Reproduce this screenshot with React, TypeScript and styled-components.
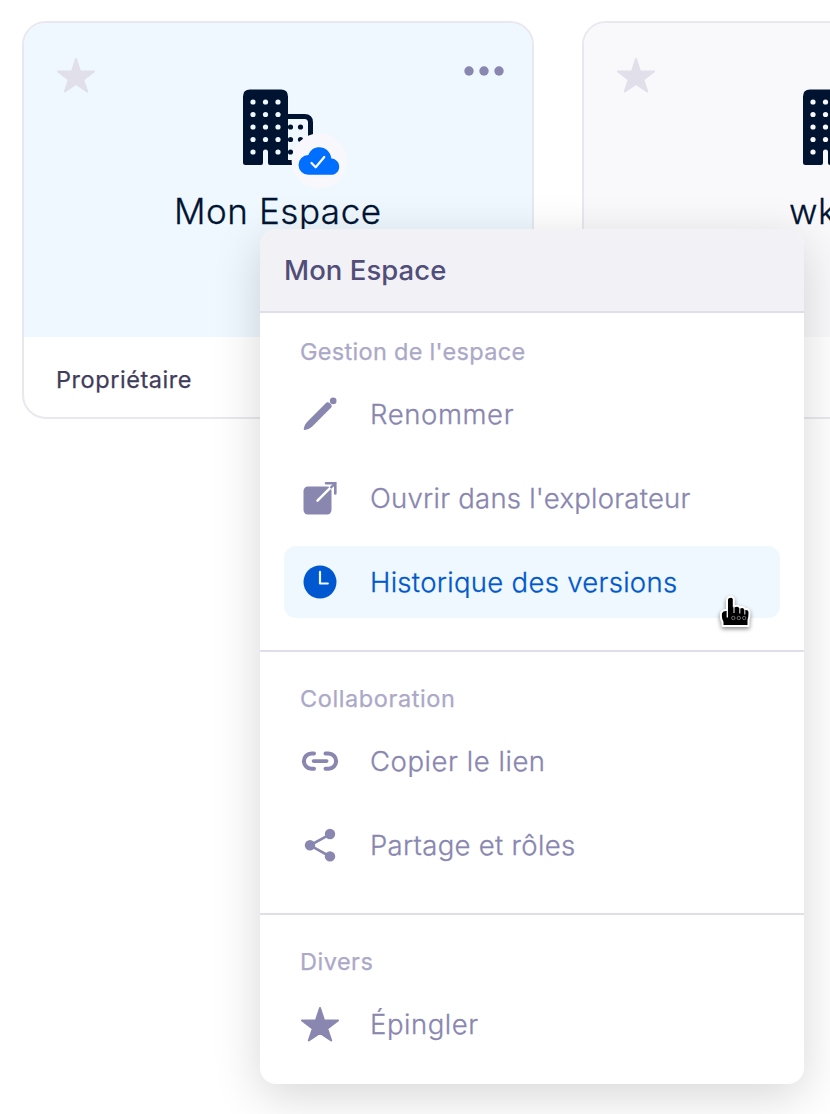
import React from "react";
import styled, { createGlobalStyle } from "styled-components";

const GlobalStyle = createGlobalStyle`
  * { box-sizing: border-box; }
  body {
    margin: 0;
    background: #fff;
    font-family: Inter, "Liberation Sans", sans-serif;
    overflow: hidden;
  }
  svg { display: block; flex: none; overflow: visible; }
`;

const Page = styled.main`
  position: relative;
  width: 830px;
  height: 1114px;
  overflow: hidden;
  padding: 21px 0 0 22px;
`;

const CardRow = styled.div`
  display: flex;
  gap: 48px;
`;

const Card = styled.article`
  flex: none;
  width: 512px;
  height: 398px;
  border: 2px solid #e9e8ef;
  border-radius: 24px;
  overflow: hidden;
  background: #fff;
`;

const CardBody = styled.div<{ $active?: boolean }>`
  height: 314px;
  padding: 33px 28px 0 32px;
  background: ${(p) => (p.$active ? "#eff7ff" : "#f9f9fc")};
`;

const CardTop = styled.div`
  display: flex;
  align-items: flex-start;
  height: 132px;
`;

const BuildingSlot = styled.div`
  margin: 33px auto 0 113px;
`;

const MoreButton = styled.button`
  border: 0;
  padding: 0;
  background: none;
`;

const CardTitle = styled.h2<{ $indent: number }>`
  margin: 0;
  padding-left: ${(p) => p.$indent}px;
  font-size: 35px;
  font-weight: 300;
  line-height: 46px;
  letter-spacing: 0.55px;
  -webkit-text-stroke: 0.3px;
  color: #001432;
  white-space: nowrap;
`;

const CardFooter = styled.footer`
  display: flex;
  align-items: center;
  height: 80px;
  padding: 4px 32px 0;
  font-size: 23.5px;
  font-weight: 400;
  letter-spacing: 0.55px;
  -webkit-text-stroke: 0.25px;
  color: #3f3c5c;
`;

const Menu = styled.div`
  position: absolute;
  left: 260px;
  top: 229px;
  width: 544px;
  height: 855px;
  border-radius: 16px;
  background: #fff;
  box-shadow: 0 12px 48px rgba(0, 0, 0, 0.16);
`;

const MenuHeader = styled.header`
  height: 84px;
  padding: 0 24px;
  border-bottom: 2px solid #dfdeea;
  border-radius: 16px 16px 0 0;
  background: #f2f1f6;
  font-size: 27.5px;
  font-weight: 500;
  line-height: 83px;
  letter-spacing: 0.05px;
  color: #514e7a;
`;

const Section = styled.section<{ $top: number; $bottom: number }>`
  padding: ${(p) => p.$top}px 24px ${(p) => p.$bottom}px;
  & + & { border-top: 2px solid #dfdeea; }
`;

const SectionLabel = styled.h3<{ $gap?: number; $spacing?: number }>`
  margin: 0 0 ${(p) => p.$gap ?? 12}px;
  padding-left: 16px;
  font-size: 23.5px;
  font-weight: 400;
  line-height: 30px;
  letter-spacing: ${(p) => p.$spacing ?? 0.5}px;
  -webkit-text-stroke: 0.25px;
  color: #aba8c8;
`;

const Items = styled.div`
  display: flex;
  flex-direction: column;
  gap: 12px;
`;

const Item = styled.div<{ $active?: boolean; $spacing: number }>`
  display: flex;
  align-items: center;
  gap: 30px;
  height: 72px;
  padding: 0 16px;
  border-radius: 12px;
  font-size: 27.5px;
  font-weight: 300;
  letter-spacing: ${(p) => p.$spacing}px;
  -webkit-text-stroke: 0.3px;
  white-space: nowrap;
  color: ${(p) => (p.$active ? "#0058cc" : "#8986b0")};
  background: ${(p) => (p.$active ? "#eff7ff" : "transparent")};
`;

const ItemText = styled.span<{ $lifted?: boolean }>`
  padding-bottom: ${(p) => (p.$lifted ? 2 : 0)}px;
`;

const Cursor = styled.svg`
  position: absolute;
  left: 455px;
  top: 360px;
  filter: drop-shadow(0 2px 2px rgba(0, 0, 0, 0.45));
`;

const Star = ({ color }: { color: string }) => (
  <svg width="40" height="40" viewBox="0 0 40 40" fill={color} stroke={color} strokeWidth="2" strokeLinejoin="round">
    <path d="M20 3L24.1 15.500H38L27.2 23.6L31.2 35.500L20 28L8.8 35.500L12.8 23.6L2 15.500H15.9Z" />
  </svg>
);

const Building = ({ badge, bg }: { badge?: boolean; bg: string }) => (
  <svg width="138" height="99" viewBox="209 89 138 99">
    <path d="M286 116.500H304.500Q310.500 116.500 310.500 122.500V162.500H286" fill="none" stroke="#001432" strokeWidth="5" />
    {[127, 139.5, 152].map((y) =>
      [290.500, 300.500].map((x) => <circle key={`${x}-${y}`} cx={x} cy={y} r="2.600" fill="#001432" />)
    )}
    <path d="M250 89.500H281Q288 89.500 288 96.500V165H270Q268 165 268 163V152Q268 149.500 265.500 149.500Q263 149.500 263 152V163Q263 165 261 165H245.500Q243 165 243 162.500V96.500Q243 89.500 250 89.500Z" fill="#001432" />
    {[102, 114.5, 127, 139.5, 152].map((y) =>
      [253, 265.5, 278].map((x) =>
        y === 152 && x === 265.5 ? null : <circle key={`${x}-${y}`} cx={x} cy={y} r="2.600" fill={bg} />
      )
    )}
    {badge && (
      <g>
        <circle cx="319.300" cy="161" r="27.700" fill="#f8f8fc" />
        <path d="M308.500 174.800A9.900 9.900 0 0 1 308.300 155C310.500 149.500 314.500 147.200 319.300 147.200C325.300 147.200 330.500 151.500 331.400 158.600C336.200 159 339.200 162.500 339.200 166.700C339.200 171.500 335.700 174.800 331.200 174.800Z" fill="#006eff" />
        <path d="M311.500 163L315.700 167.300L324.300 157" fill="none" stroke="#fff" strokeWidth="2.200" strokeLinecap="round" strokeLinejoin="round" />
      </g>
    )}
  </svg>
);

const Dots = () => (
  <svg width="40" height="30" viewBox="0 0 40 30" fill="#8986b0">
    <circle cx="5" cy="15" r="4.700" />
    <circle cx="20" cy="15" r="4.700" />
    <circle cx="35" cy="15" r="4.700" />
  </svg>
);

const Pencil = () => (
  <svg width="40" height="40" viewBox="0 0 40 40" fill="#8986b0">
    <path d="M26.500 8.600Q28 7.500 29.600 9L31.200 10.600Q32.400 12 31.200 13.400L12 32.700Q8.500 35.800 4.800 36Q3.500 36 3.700 34.700Q4 31.300 7 28Z" />
    <circle cx="33.200" cy="6.900" r="3.300" />
  </svg>
);

const OpenExternal = () => (
  <svg width="40" height="40" viewBox="0 0 40 40" fill="none">
    <rect x="3.500" y="8.500" width="28" height="28" rx="4.500" fill="#8986b0" />
    <path d="M17.500 22.700L32 8.200" stroke="#fff" strokeWidth="2.600" strokeLinecap="round" />
    <path d="M30.500 10L35.500 5" stroke="#8986b0" strokeWidth="2.400" />
    <path d="M26 5.200H35.300V15.500" stroke="#8986b0" strokeWidth="2.600" strokeLinecap="round" />
  </svg>
);

const Clock = () => (
  <svg width="40" height="40" viewBox="0 0 40 40" fill="none">
    <circle cx="20" cy="20" r="16.500" fill="#0058d0" />
    <path d="M20 9.800V21.500H27.800" stroke="#eff7ff" strokeWidth="2.200" strokeLinecap="round" strokeLinejoin="round" />
  </svg>
);

const Link = () => (
  <svg width="40" height="40" viewBox="0 0 40 40" fill="none" stroke="#8986b0" strokeWidth="4" strokeLinecap="round">
    <path d="M14 11.500H11.500A7.600 7.600 0 0 0 11.500 26.700H14M25.500 11.500H28.500A7.600 7.600 0 0 1 28.500 26.700H25.500" />
    <path d="M13.500 19.100H26.700" strokeWidth="3.600" />
  </svg>
);

const Share = () => (
  <svg width="40" height="40" viewBox="0 0 40 40" fill="#8986b0">
    <path d="M30 8.300L10 19.300L30 30.500" fill="none" stroke="#8986b0" strokeWidth="2.600" />
    <circle cx="30" cy="8" r="5.200" />
    <circle cx="10" cy="19.200" r="5.200" />
    <circle cx="30" cy="30.400" r="5.200" />
  </svg>
);

export default function App() {
  return (
    <>
      <GlobalStyle />
      <Page>
        <CardRow>
          <Card>
            <CardBody $active>
              <CardTop>
                <Star color="#e0dfea" />
                <BuildingSlot><Building badge bg="#eff7ff" /></BuildingSlot>
                <MoreButton aria-label="Options"><Dots /></MoreButton>
              </CardTop>
              <CardTitle $indent={118}>Mon Espace</CardTitle>
            </CardBody>
            <CardFooter>Propriétaire</CardFooter>
          </Card>
          <Card>
            <CardBody>
              <CardTop>
                <Star color="#e0dfea" />
                <BuildingSlot><Building bg="#f9f9fc" /></BuildingSlot>
              </CardTop>
              <CardTitle $indent={173}>wk</CardTitle>
            </CardBody>
            <CardFooter />
          </Card>
        </CardRow>

        <Menu>
          <MenuHeader>Mon Espace</MenuHeader>
          <Section $top={24} $bottom={32}>
            <SectionLabel $gap={11} $spacing={0.3}>Gestion de l'espace</SectionLabel>
            <Items>
              <Item $spacing={0.6}><Pencil /><ItemText>Renommer</ItemText></Item>
              <Item $spacing={0.24}><OpenExternal /><ItemText>Ouvrir dans l'explorateur</ItemText></Item>
              <Item $active $spacing={0.3}><Clock /><ItemText>Historique des versions</ItemText></Item>
            </Items>
          </Section>
          <Section $top={32} $bottom={31}>
            <SectionLabel $spacing={0.6}>Collaboration</SectionLabel>
            <Items>
              <Item $spacing={0.55}><Link /><ItemText $lifted>Copier le lien</ItemText></Item>
              <Item $spacing={0.3}><Share /><ItemText $lifted>Partage et rôles</ItemText></Item>
            </Items>
          </Section>
          <Section $top={32} $bottom={23}>
            <SectionLabel>Divers</SectionLabel>
            <Items>
              <Item $spacing={0.55}><Star color="#8986b0" /><ItemText $lifted>Épingler</ItemText></Item>
            </Items>
          </Section>
          <Cursor width="40" height="44" viewBox="0 0 40 44">
            <path d="M14.500 8Q18 7 18.800 10V17.500Q23 15.500 25 18.500Q28.500 17 30 20Q34.500 19.500 34.500 24Q34.500 28 33.500 31V37H7.500V33Q5.500 30 6 24Q7.500 20.500 12 21V10.500Q12.500 8.500 14.500 8Z" fill="#000" stroke="#fff" strokeWidth="2" strokeLinejoin="round" />
            <path d="M12.300 21V28.500" stroke="#fff" strokeWidth="1.300" />
            <path d="M19 17V24M24.800 19V24.500M29.800 20.500V25.500" stroke="#ddd" strokeWidth="1.100" />
            <g fill="none" stroke="#777" strokeWidth="0.900">
              <circle cx="18.300" cy="29" r="1.700" />
              <circle cx="23.800" cy="29" r="1.700" />
              <circle cx="29.200" cy="29" r="1.700" />
            </g>
          </Cursor>
        </Menu>
      </Page>
    </>
  );
}
